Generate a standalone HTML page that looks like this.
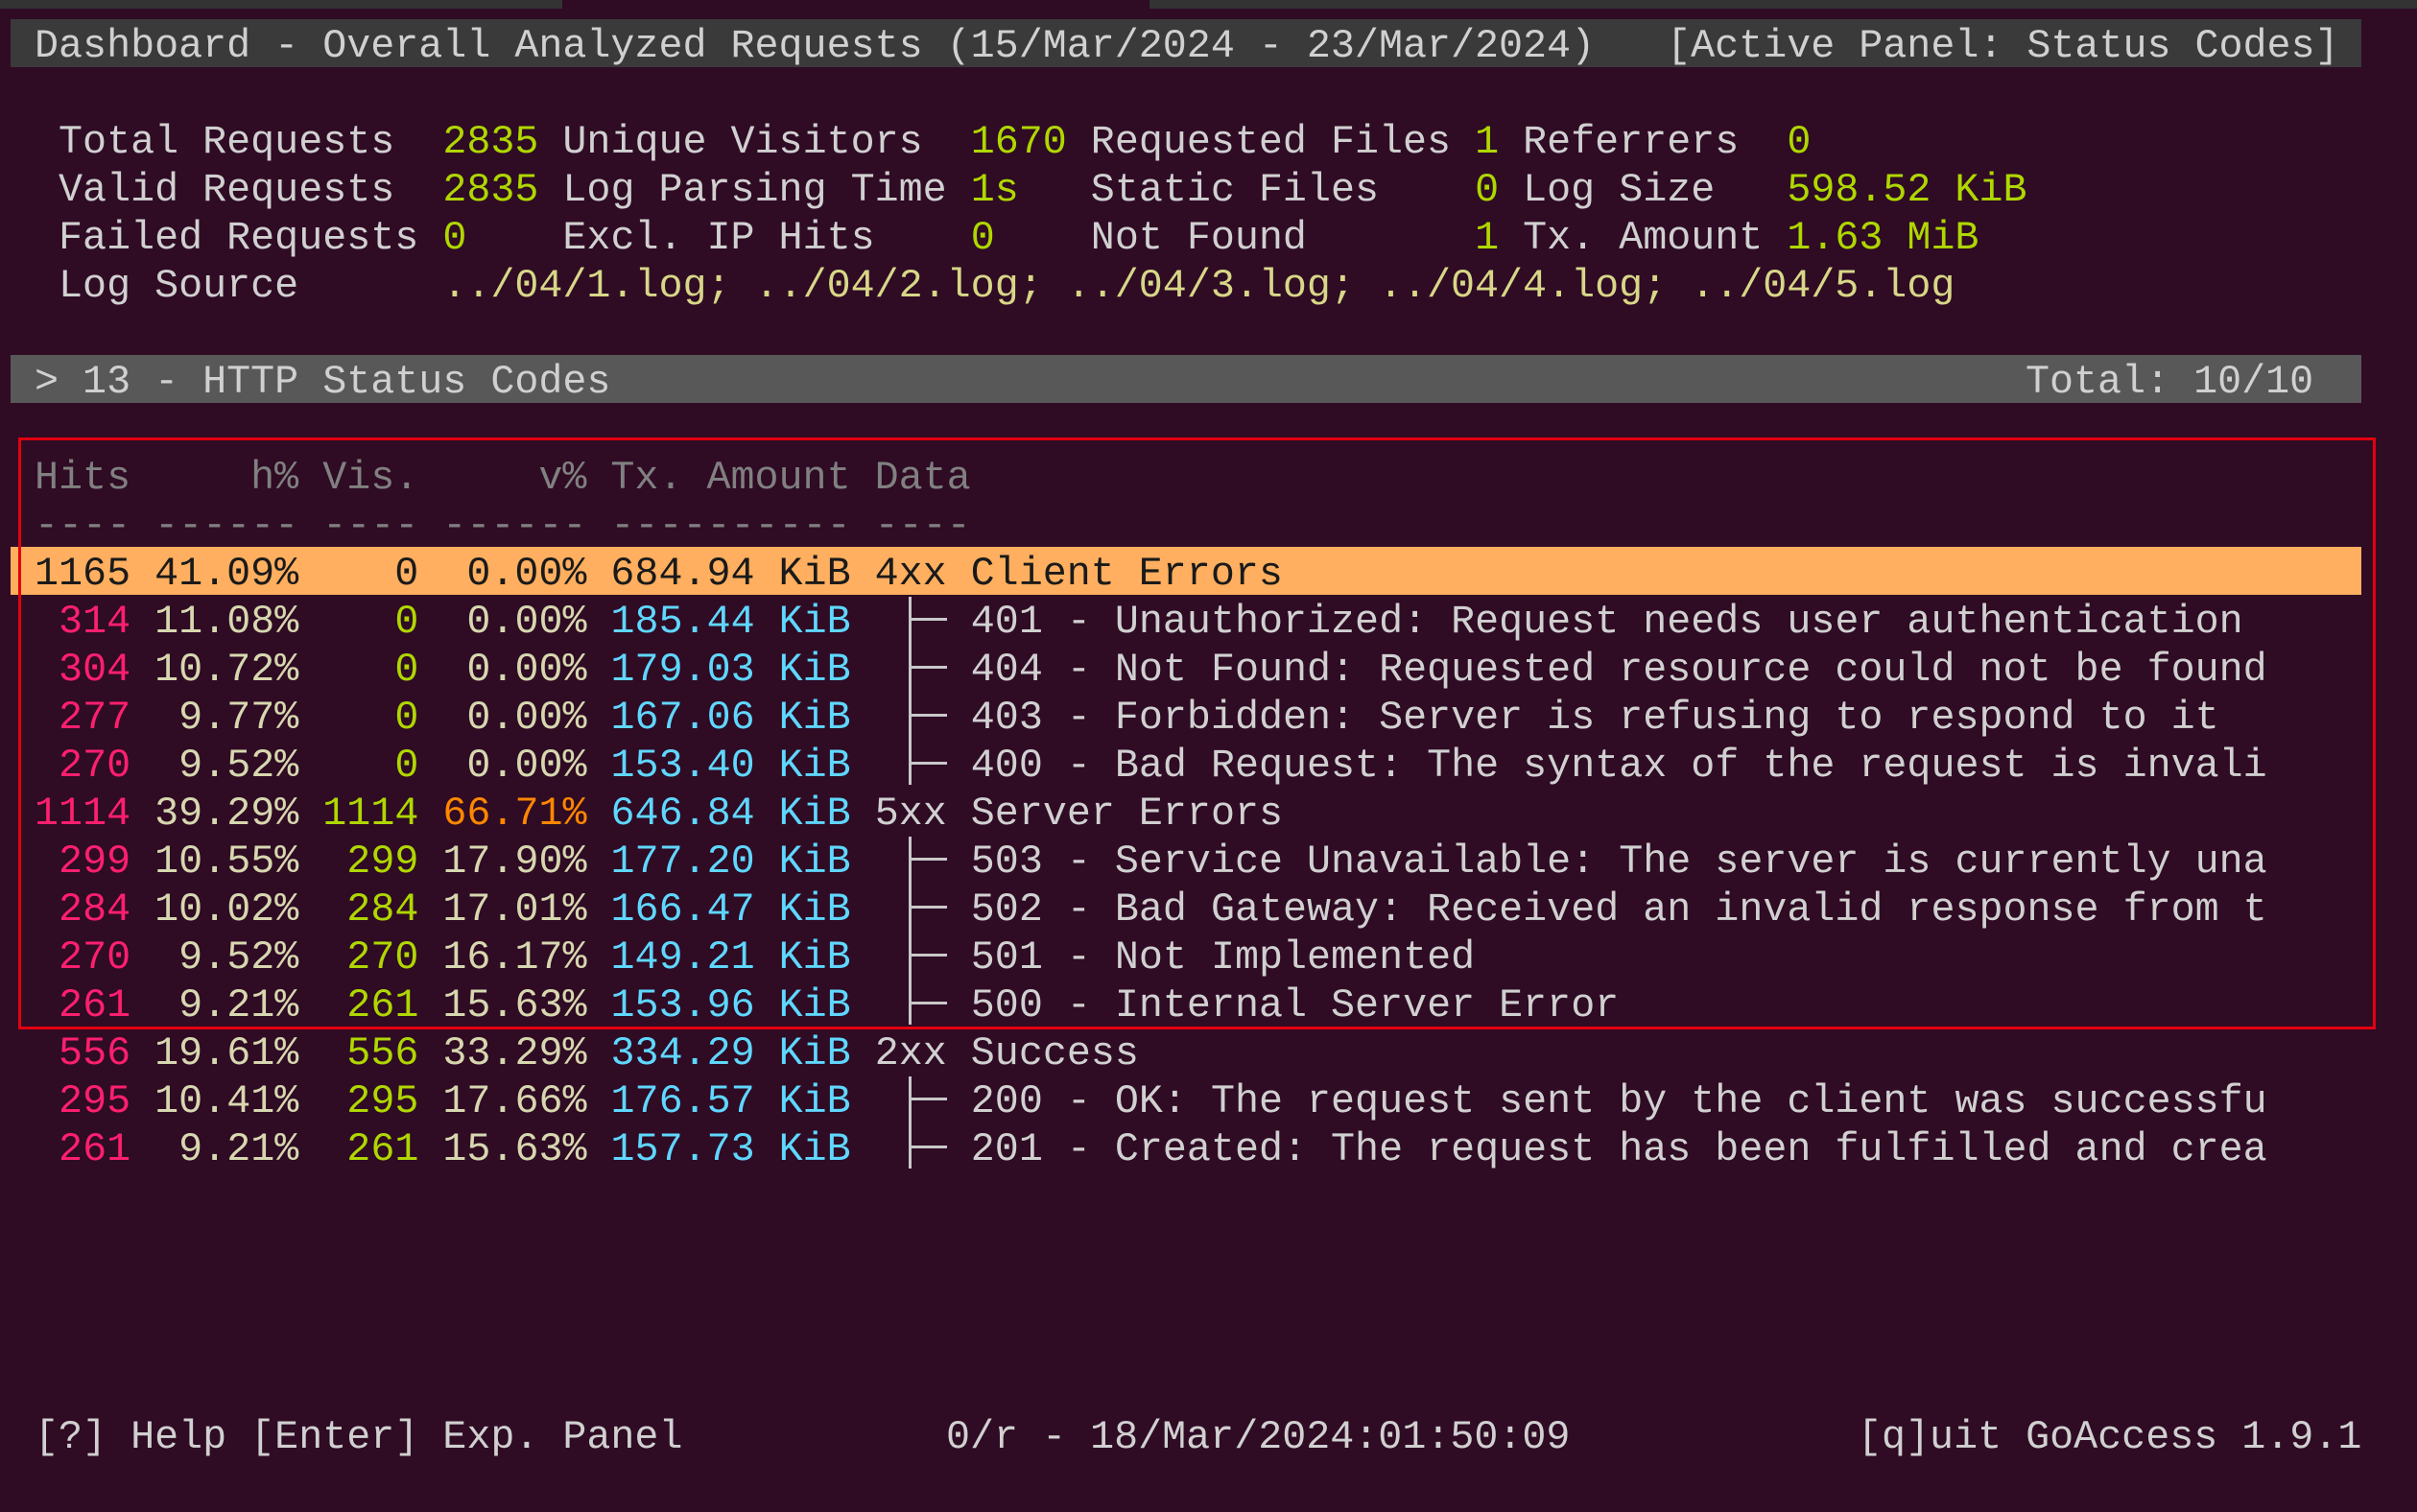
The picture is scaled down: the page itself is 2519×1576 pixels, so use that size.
<!DOCTYPE html>
<html><head><meta charset="utf-8"><style>
html,body{margin:0;padding:0;}
body{width:2519px;height:1576px;background:#2f0b24;position:relative;overflow:hidden;font-family:"Liberation Mono","DejaVu Sans Mono",monospace;font-size:41.7px;color:#d0d0d0;}
.r{position:absolute;left:11px;height:50px;line-height:50px;white-space:pre;margin-top:3px;}
.g{color:#afd700}.y{color:#d7d787}.p{color:#ff1f6f}.t{color:#d7d7af}.c{color:#5fd7ff}.o{color:#ff8700}.h{color:#808080}.w{color:#d0d0d0}
.vl{position:absolute;width:3px;background:#c8c8c8;left:947px;}
.hl{position:absolute;height:3px;background:#c8c8c8;left:947px;width:40px;}
</style></head><body>
<div style="position:absolute;left:0;top:0;width:586px;height:9px;background:#333"></div>
<div style="position:absolute;left:1198px;top:0;width:1321px;height:9px;background:#333"></div>
<div style="position:absolute;left:11px;top:20px;width:2450px;height:50px;background:#3a3a3a"></div>
<div style="position:absolute;left:11px;top:370px;width:2450px;height:50px;background:#585858"></div>
<div style="position:absolute;left:11px;top:570px;width:2450px;height:50px;background:#ffaf5f"></div>
<div style="position:absolute;left:19px;top:456px;width:2451px;height:611px;border:3px solid #e3000f"></div>

<div class="r" style="top:20px"> Dashboard - Overall Analyzed Requests (15/Mar/2024 - 23/Mar/2024)   [Active Panel: Status Codes]</div>
<div class="r" style="top:120px">  Total Requests  <span class="g">2835</span> Unique Visitors  <span class="g">1670</span> Requested Files <span class="g">1</span> Referrers  <span class="g">0</span></div>
<div class="r" style="top:170px">  Valid Requests  <span class="g">2835</span> Log Parsing Time <span class="g">1s</span>   Static Files    <span class="g">0</span> Log Size   <span class="g">598.52 KiB</span></div>
<div class="r" style="top:220px">  Failed Requests <span class="g">0</span>    Excl. IP Hits    <span class="g">0</span>    Not Found       <span class="g">1</span> Tx. Amount <span class="g">1.63 MiB</span></div>
<div class="r" style="top:270px">  Log Source      <span class="y">../04/1.log; ../04/2.log; ../04/3.log; ../04/4.log; ../04/5.log</span></div>
<div class="r" style="top:370px"> &gt; 13 - HTTP Status Codes</div>
<div class="r" style="top:370px;left:2111px">Total: 10/10</div>
<div class="r h" style="top:470px"> Hits     h% Vis.     v% Tx. Amount Data</div>
<div class="r h" style="top:520px"> ---- ------ ---- ------ ---------- ----</div>
<div class="r" style="top:570px;color:#1a1a1a"> 1165 41.09%    0  0.00% 684.94 KiB 4xx Client Errors</div>
<div class="r" style="top:620px"> <span class="p"> 314</span> <span class="t">11.08%</span> <span class="g">   0</span> <span class="t"> 0.00%</span> <span class="c">185.44 KiB</span>     401 - Unauthorized: Request needs user authentication</div>
<div class="r" style="top:670px"> <span class="p"> 304</span> <span class="t">10.72%</span> <span class="g">   0</span> <span class="t"> 0.00%</span> <span class="c">179.03 KiB</span>     404 - Not Found: Requested resource could not be found</div>
<div class="r" style="top:720px"> <span class="p"> 277</span> <span class="t"> 9.77%</span> <span class="g">   0</span> <span class="t"> 0.00%</span> <span class="c">167.06 KiB</span>     403 - Forbidden: Server is refusing to respond to it</div>
<div class="r" style="top:770px"> <span class="p"> 270</span> <span class="t"> 9.52%</span> <span class="g">   0</span> <span class="t"> 0.00%</span> <span class="c">153.40 KiB</span>     400 - Bad Request: The syntax of the request is invali</div>
<div class="r" style="top:820px"> <span class="p">1114</span> <span class="t">39.29%</span> <span class="g">1114</span> <span class="o">66.71%</span> <span class="c">646.84 KiB</span> 5xx Server Errors</div>
<div class="r" style="top:870px"> <span class="p"> 299</span> <span class="t">10.55%</span> <span class="g"> 299</span> <span class="t">17.90%</span> <span class="c">177.20 KiB</span>     503 - Service Unavailable: The server is currently una</div>
<div class="r" style="top:920px"> <span class="p"> 284</span> <span class="t">10.02%</span> <span class="g"> 284</span> <span class="t">17.01%</span> <span class="c">166.47 KiB</span>     502 - Bad Gateway: Received an invalid response from t</div>
<div class="r" style="top:970px"> <span class="p"> 270</span> <span class="t"> 9.52%</span> <span class="g"> 270</span> <span class="t">16.17%</span> <span class="c">149.21 KiB</span>     501 - Not Implemented</div>
<div class="r" style="top:1020px"> <span class="p"> 261</span> <span class="t"> 9.21%</span> <span class="g"> 261</span> <span class="t">15.63%</span> <span class="c">153.96 KiB</span>     500 - Internal Server Error</div>
<div class="r" style="top:1070px"> <span class="p"> 556</span> <span class="t">19.61%</span> <span class="g"> 556</span> <span class="t">33.29%</span> <span class="c">334.29 KiB</span> 2xx Success</div>
<div class="r" style="top:1120px"> <span class="p"> 295</span> <span class="t">10.41%</span> <span class="g"> 295</span> <span class="t">17.66%</span> <span class="c">176.57 KiB</span>     200 - OK: The request sent by the client was successfu</div>
<div class="r" style="top:1170px"> <span class="p"> 261</span> <span class="t"> 9.21%</span> <span class="g"> 261</span> <span class="t">15.63%</span> <span class="c">157.73 KiB</span>     201 - Created: The request has been fulfilled and crea</div>

<div class="vl" style="top:622px;height:196px"></div>
<div class="hl" style="top:644px"></div><div class="hl" style="top:694px"></div><div class="hl" style="top:744px"></div><div class="hl" style="top:794px"></div>
<div class="vl" style="top:872px;height:196px"></div>
<div class="hl" style="top:894px"></div><div class="hl" style="top:944px"></div><div class="hl" style="top:994px"></div><div class="hl" style="top:1044px"></div>
<div class="vl" style="top:1122px;height:96px"></div>
<div class="hl" style="top:1144px"></div><div class="hl" style="top:1194px"></div>

<div class="r" style="top:1470px"> [?] Help [Enter] Exp. Panel</div>
<div class="r" style="top:1470px;left:986px">0/r - 18/Mar/2024:01:50:09</div>
<div class="r" style="top:1470px;left:1936px">[q]uit GoAccess 1.9.1</div>
</body></html>
